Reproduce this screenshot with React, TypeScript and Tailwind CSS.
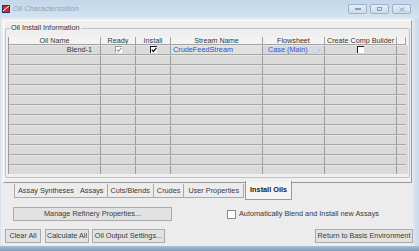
import React from 'react';

const COLS = 'grid grid-cols-[92px_35px_35px_92px_62px_72px_9px]';

function Check({ checked, faded }: { checked?: boolean; faded?: boolean }) {
  const edge = faded ? 'border-[#9a9a9a]' : 'border-[#1a1a1a]';
  return (
    <span className={`inline-flex w-[7px] h-[7px] border-t border-l ${edge} bg-white items-center justify-center`}>
      {checked && (
        <svg width="6" height="6" viewBox="0 0 6 6">
          <path d="M0.8 2.6 L2.4 4.4 L5.4 0.8" fill="none" stroke={faded ? '#9a9a9a' : '#111'} strokeWidth="1.3" />
        </svg>
      )}
    </span>
  );
}

function Btn({ children, className = '' }: { children: React.ReactNode; className?: string }) {
  return (
    <div
      className={`h-[14px] flex items-center justify-center border border-[#ababab] bg-[#e2e2e2] text-[7.3px] text-[#3a3a3a] ${className}`}
    >
      {children}
    </div>
  );
}

function WinBtn({ children }: { children: React.ReactNode }) {
  return (
    <div className="w-[19px] h-[10px] rounded-[2px] border border-[#9db1c5] bg-gradient-to-b from-[#e4edf5] to-[#cddcea] flex items-center justify-center">
      {children}
    </div>
  );
}

export default function App() {
  const rows = Array.from({ length: 13 }, (_, i) => i);
  return (
    <div className="w-[419px] h-[251px] flex flex-col bg-[#c9dbeb] font-['Liberation_Sans',Arial,sans-serif] overflow-hidden">
      {/* title bar */}
      <div className="h-[18px] flex items-center bg-gradient-to-b from-[#c3d7ea] to-[#d3e3f1] pl-[2px] pr-[8px]">
        <svg width="8" height="8" viewBox="0 0 8 8">
          <rect x="0" y="0" width="8" height="8" fill="#23366b" />
          <rect x="1" y="1" width="6" height="6" fill="#d32a2a" />
          <path d="M1 6 L7 1" stroke="#fff" strokeWidth="1" />
        </svg>
        <span className="ml-[3px] text-[7.5px] text-[#8fa3b8]">Oil Characterization</span>
        <div className="ml-auto flex gap-[3px]">
          <WinBtn>
            <span className="block w-[6px] h-[2px] bg-[#8c9aa8]" />
          </WinBtn>
          <WinBtn>
            <span className="block w-[5px] h-[4px] border border-[#8c9aa8]" />
          </WinBtn>
          <WinBtn>
            <svg width="6" height="5" viewBox="0 0 6 5">
              <path d="M0.5 0.5 L5.5 4.5 M5.5 0.5 L0.5 4.5" stroke="#98a6b4" strokeWidth="1" />
            </svg>
          </WinBtn>
        </div>
      </div>

      {/* client */}
      <div className="flex-1 flex">
        <div className="w-[1px] bg-[#d7e4ef]" />
        <div className="w-[412px] bg-[#ececec] flex flex-col text-[#3a3a3a]">
          {/* tab page */}
          <div className="mt-[2px] ml-[2px] w-[409px] h-[163px] border border-t-white border-l-white border-r-[#9a9a9a] border-b-[#9a9a9a] bg-[#efefef] pr-[1px]">
            <fieldset className="mt-[3px] ml-[1px] h-[154px] border border-[#c2c2c2] rounded-[2px] pl-[2px] pr-[1px]">
              <legend className="ml-[2px] px-[1px] text-[7.3px] leading-[8px] text-[#333]">Oil Install Information</legend>
              <div className="mt-[5px] h-[137px] overflow-hidden bg-[#dadada] border-l border-[#9c9c9c]">
                <div className={`${COLS} h-[8px] bg-[#f3f3f3] text-[7.2px] leading-[7px] text-[#333]`}>
                  {['Oil Name', 'Ready', 'Install', 'Stream Name', 'Flowsheet', 'Create Comp Builder', ''].map((h, i) => (
                    <div key={i} className="text-center border-r border-b border-[#a3a3a3] whitespace-nowrap overflow-hidden">
                      {h}
                    </div>
                  ))}
                </div>
                {rows.map((r) => (
                  <div key={r} className={`${COLS} h-[10px] text-[7.3px] leading-[8px]`}>
                    <div className="border-r border-r-[#9c9c9c] border-b border-b-[#a8a8a8] border-t border-t-[#e6e6e6] text-right pr-[8px]">
                      {r === 0 ? 'Blend-1' : ''}
                    </div>
                    <div className="border-r border-r-[#9c9c9c] border-b border-b-[#a8a8a8] border-t border-t-[#e6e6e6] flex justify-center">
                      {r === 0 && <Check checked faded />}
                    </div>
                    <div className="border-r border-r-[#9c9c9c] border-b border-b-[#a8a8a8] border-t border-t-[#e6e6e6] flex justify-center">
                      {r === 0 && <Check checked />}
                    </div>
                    <div className={`border-r border-r-[#9c9c9c] border-b border-b-[#a8a8a8] border-t border-t-[#e6e6e6] pl-[2px] text-[#2f4fc4] ${r === 0 ? 'bg-[#e1e1e1]' : ''}`}>
                      {r === 0 ? 'CrudeFeedStream' : ''}
                    </div>
                    <div className={`border-r border-r-[#9c9c9c] border-b border-b-[#a8a8a8] border-t border-t-[#e6e6e6] pl-[5px] text-[#3a56c0] flex ${r === 0 ? 'bg-[#d3d9e4]' : ''}`}>
                      {r === 0 && (
                        <>
                          <span>Case (Main)</span>
                          <span className="ml-auto mr-[3px] text-[5px] text-[#bbbbbb]">▾</span>
                        </>
                      )}
                    </div>
                    <div className="border-r border-r-[#9c9c9c] border-b border-b-[#a8a8a8] border-t border-t-[#e6e6e6] flex justify-center">
                      {r === 0 && <Check />}
                    </div>
                    <div className="border-b border-b-[#a8a8a8] border-t border-t-[#e6e6e6]" />
                  </div>
                ))}
              </div>
            </fieldset>
          </div>

          {/* tabs */}
          <div className="mt-[1px] ml-[13px] flex items-start text-[7.3px] leading-[10px]">
            <div className="h-[14px] flex items-center border border-t-0 border-[#a9a9a9] bg-[#ececec]">
              <span className="px-[3px]">Assay Syntheses</span>
              <span className="px-[3px]">Assays</span>
            </div>
            <div className="h-[14px] flex items-center px-[3px] border border-t-0 border-l-0 border-[#a9a9a9]">Cuts/Blends</div>
            <div className="h-[14px] flex items-center px-[3px] border border-t-0 border-l-0 border-[#a9a9a9]">Crudes</div>
            <div className="h-[14px] flex items-center px-[4px] border border-t-0 border-l-0 border-[#a9a9a9]">User Properties</div>
            <div className="-mt-[3px] h-[19px] ml-[1px] flex items-center px-[4px] border border-t-0 border-[#9a9a9a] bg-[#f4f4f4] font-bold text-[#222]">
              Install Oils
            </div>
          </div>

          {/* manage + auto blend */}
          <div className="mt-[7px] flex items-center">
            <Btn className="ml-[12px] w-[159px]">Manage Refinery Properties...</Btn>
            <span className="ml-[55px] w-[9px] h-[9px] border border-[#8a8a8a] bg-white" />
            <span className="ml-[3px] text-[7.3px]">Automatically Blend and Install new Assays</span>
          </div>

          {/* bottom buttons */}
          <div className="mt-[8px] flex items-center">
            <Btn className="ml-[4px] w-[36px]">Clear All</Btn>
            <Btn className="ml-[4px] w-[44px]">Calculate All</Btn>
            <Btn className="ml-[3px] w-[73px]">Oil Output Settings...</Btn>
            <Btn className="ml-auto w-[98px]">Return to Basis Environment</Btn>
          </div>
        </div>
        <div className="flex-1 bg-gradient-to-r from-[#dbe7f1] to-[#c7d9e9]" />
      </div>
      <div className="h-[5px] bg-gradient-to-b from-[#a9bfd3] to-[#7f9bb6]" />
    </div>
  );
}
